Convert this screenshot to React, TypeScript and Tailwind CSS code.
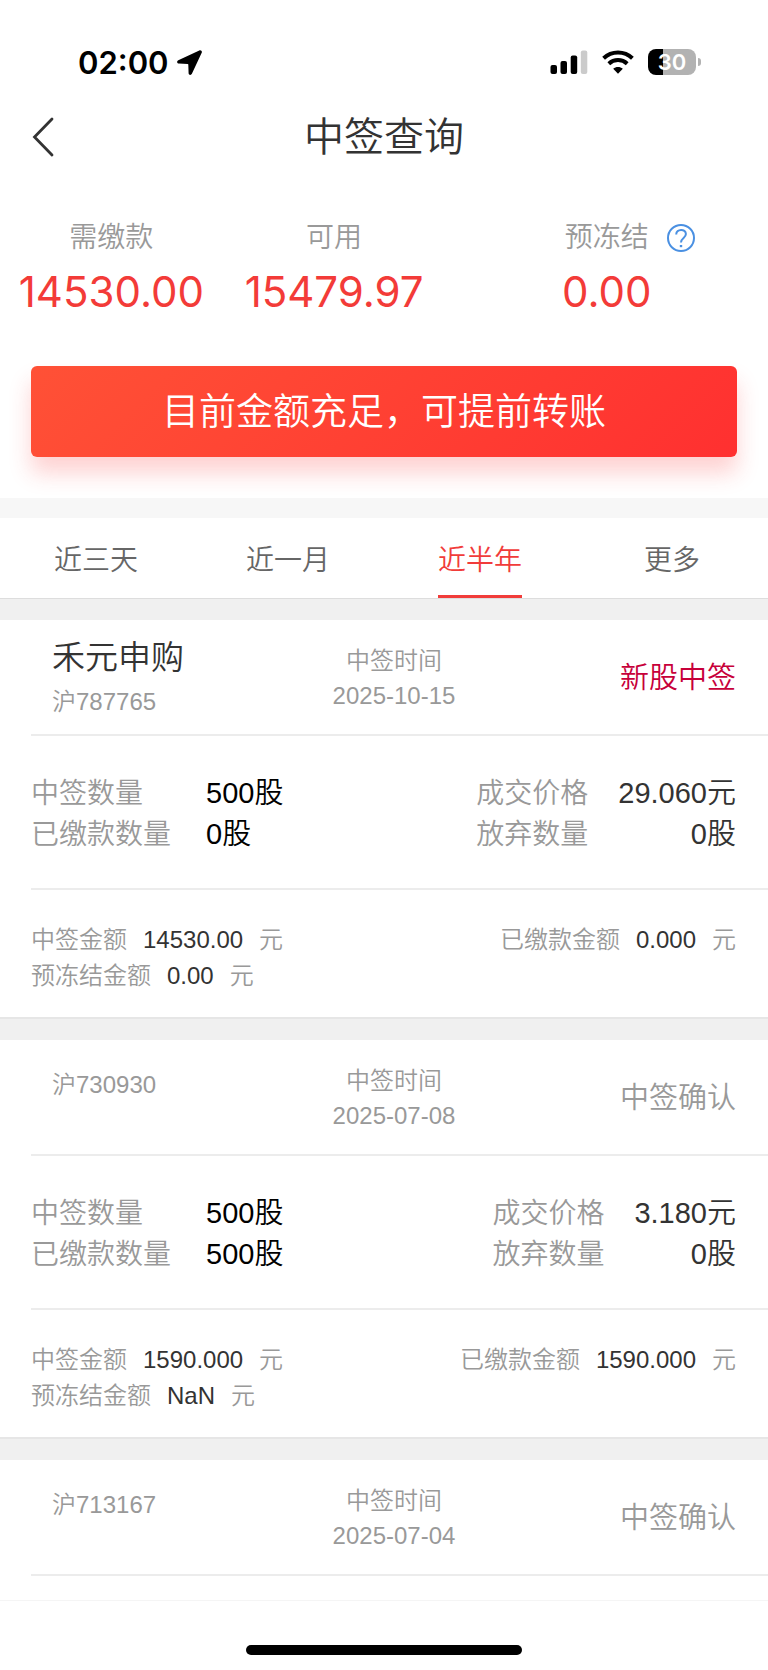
import { useState } from 'react';
import { clsx } from 'clsx';

type Details = {
  count: string;
  paidCount: string;
  price: string;
  waived: string;
  amount: string;
  frozen: string;
  paidAmount: string;
};

type Lot = {
  code: string;
  name?: string;
  date: string;
  status: string;
  highlight?: boolean;
  details?: Details;
};

const tabs = ['近三天', '近一月', '近半年', '更多'];

const lots: Lot[] = [
  {
    code: '沪787765',
    name: '禾元申购',
    date: '2025-10-15',
    status: '新股中签',
    highlight: true,
    details: {
      count: '500股',
      paidCount: '0股',
      price: '29.060元',
      waived: '0股',
      amount: '14530.00',
      frozen: '0.00',
      paidAmount: '0.000',
    },
  },
  {
    code: '沪730930',
    date: '2025-07-08',
    status: '中签确认',
    details: {
      count: '500股',
      paidCount: '500股',
      price: '3.180元',
      waived: '0股',
      amount: '1590.000',
      frozen: 'NaN',
      paidAmount: '1590.000',
    },
  },
  { code: '沪713167', date: '2025-07-04', status: '中签确认' },
];

function StatusBar() {
  return (
    <div className="flex h-[100px] items-center justify-between pt-6 pr-[67px] pl-[78px] text-black">
      <div className="flex items-center gap-2">
        <span className="pt-px font-['Inter',sans-serif] text-[31px] leading-8 font-semibold">02:00</span>
        <svg className="h-[25px] w-[25px]" viewBox="0 0 25 25" fill="currentColor" aria-hidden="true">
          <path d="M22.3.4 1.300 10.200C-.500 11.100-.200 13.400 1.800 13.500L10.700 14c.4 0 .6.2.6.6L11.600 23.200c.1 1.900 2.500 2.300 3.300.600L24.700 2.700C25.400 1.100 23.900-.300 22.300.400Z" />
        </svg>
      </div>
      <div className="flex items-center">
        <svg className="h-6 w-[38px]" viewBox="0 0 38 24" aria-hidden="true">
          <rect x="0.500" y="15" width="6.500" height="9" rx="2" />
          <rect x="10.500" y="11" width="6.500" height="13" rx="2" />
          <rect x="20.700" y="5.500" width="6.500" height="18.500" rx="2" />
          <rect x="30.800" y="0.500" width="6.500" height="23.500" rx="2" fill="#cbcbcb" />
        </svg>
        <svg className="ml-[14px] h-6 w-8" viewBox="0 0 32 24" fill="none" stroke="currentColor" aria-hidden="true">
          <path d="M1.600 8.300C9.700.600 22.300.600 30.400 8.300" strokeWidth="4" />
          <path d="M6.800 13.700C12 8.900 20 8.900 25.200 13.700" strokeWidth="4" />
          <path d="M16 23.700l-4.800-4.900c2.700-2.500 6.900-2.500 9.600 0Z" fill="currentColor" stroke="none" />
        </svg>
        <div className="ml-[14px] flex h-[26px] w-12 items-center justify-center rounded-lg bg-linear-to-r from-black from-31% to-[#b2b2b2] to-31% font-['Inter',sans-serif] text-[22px] leading-none font-semibold text-white">
          30
        </div>
        <span className="ml-[2px] h-2 w-[3px] rounded-r-full bg-[#b2b2b2]" />
      </div>
    </div>
  );
}

function SummaryItem({ label, value, help }: { label: string; value: string; help?: boolean }) {
  return (
    <div className="flex flex-col items-center">
      <dt className="relative text-[28px] leading-[44px] text-[#999]">
        {label}
        {help && (
          <button type="button" aria-label="预冻结说明" className="absolute top-2 left-full ml-[18px] text-[#4a90e2]">
            <svg className="h-7 w-7" viewBox="0 0 28 28" fill="none" stroke="currentColor" strokeWidth="2">
              <circle cx="14" cy="14" r="13" />
              <path d="M9.200 10.600c0-6.200 9.700-6.200 9.700-.500 0 4-4.900 3.700-4.900 8.400" />
              <path d="M14 21v2.200" strokeWidth="2.400" />
            </svg>
          </button>
        )}
      </dt>
      <dd className="font-['Inter',sans-serif] text-[42px] leading-[64px] font-normal text-[#f33b38]">{value}</dd>
    </div>
  );
}

function Amount({ label, value }: { label: string; value: string }) {
  return (
    <div className="flex gap-4">
      <dt>{label}</dt>
      <dd className="flex gap-4">
        <span className="text-[#333]">{value}</span>元
      </dd>
    </div>
  );
}

function LotCard({ lot }: { lot: Lot }) {
  const d = lot.details;
  return (
    <article className="border-t-[21px] border-[#f0f0f0] pl-[31px] text-[#999]">
      <header className="grid h-[116px] grid-cols-3 border-b-2 border-[#ececec] pr-8 pl-[21px]">
        <div className={clsx('text-[24px] leading-[44px]', lot.name ? 'pt-4' : 'pt-[23px]')}>
          {lot.name && <h2 className="text-[33px] text-[#333]">{lot.name}</h2>}
          <p>{lot.code}</p>
        </div>
        <div className="pt-[23px] text-center text-[24px] leading-[35px]">
          <p>中签时间</p>
          <time dateTime={lot.date}>{lot.date}</time>
        </div>
        <p className={clsx('self-center pt-1 text-right text-[29px]', lot.highlight && 'text-[#c7003a]')}>{lot.status}</p>
      </header>
      {d && (
        <>
          <div className="flex justify-between border-b-2 border-[#ececec] pt-[37px] pr-8 pb-[33px] text-[29px] leading-[41px]">
            <dl className="grid grid-cols-[145px_auto] gap-x-[30px]">
              <dt className="text-[28px]">中签数量</dt>
              <dd className="text-black">{d.count}</dd>
              <dt className="text-[28px]">已缴款数量</dt>
              <dd className="text-black">{d.paidCount}</dd>
            </dl>
            <dl className="grid grid-cols-[auto_auto] gap-x-[30px]">
              <dt className="text-[28px]">成交价格</dt>
              <dd className="text-right text-[#333]">{d.price}</dd>
              <dt className="text-[28px]">放弃数量</dt>
              <dd className="text-right text-[#333]">{d.waived}</dd>
            </dl>
          </div>
          <div className="-ml-[31px] flex justify-between border-b-2 border-[#e6e6e6] pt-8 pr-8 pb-[23px] pl-[31px] text-[24px] leading-[36px]">
            <dl>
              <Amount label="中签金额" value={d.amount} />
              <Amount label="预冻结金额" value={d.frozen} />
            </dl>
            <dl>
              <Amount label="已缴款金额" value={d.paidAmount} />
            </dl>
          </div>
        </>
      )}
    </article>
  );
}

export default function App() {
  const [active, setActive] = useState('近半年');

  return (
    <div className="flex min-h-screen flex-col bg-white font-['Liberation_Sans','Noto_Sans_CJK_SC',sans-serif] font-[350]">
      <StatusBar />

      <header className="relative flex h-[74px] items-center justify-center text-[#333]">
        <button type="button" aria-label="返回" className="absolute left-8">
          <svg className="h-10 w-[22px]" viewBox="0 0 22 40" fill="none" stroke="currentColor" strokeWidth="2.800" strokeLinecap="round">
            <path d="M20 2 2.500 20 20 38" />
          </svg>
        </button>
        <h1 className="text-[40px] leading-none">中签查询</h1>
      </header>

      <section className="pt-[42px] pb-[41px]">
        <dl className="grid grid-cols-[29%_29%_42%]">
          <SummaryItem label="需缴款" value="14530.00" />
          <SummaryItem label="可用" value="15479.97" />
          <SummaryItem label="预冻结" value="0.00" help />
        </dl>
        <div className="px-[31px] pt-[42px]">
          <button
            type="button"
            className="h-[91px] w-full rounded-md bg-linear-[135deg] from-[#ff5136] to-[#ff3030] pt-0.5 text-[37px] text-white shadow-[0_16px_22px_rgba(250,48,48,0.22)]"
          >
            目前金额充足，可提前转账
          </button>
        </div>
      </section>

      <nav className="grid grid-cols-4 justify-items-center border-t-20 border-b border-t-[#f7f7f7] border-b-[#ddd]">
        {tabs.map(tab => (
          <button
            key={tab}
            type="button"
            onClick={() => setActive(tab)}
            className={clsx(
              'h-20 border-b-3 pt-2 text-[28px]',
              tab === active ? 'border-[#f13c3a] text-[#f13c3a]' : 'border-transparent text-[#666]',
            )}
          >
            {tab}
          </button>
        ))}
      </nav>

      <main className="pb-6">
        {lots.map(lot => (
          <LotCard key={lot.code} lot={lot} />
        ))}
      </main>

      <footer className="mt-auto flex h-[71px] items-end justify-center border-t border-[#f5f5f5] pb-4">
        <span className="h-[10px] w-[36%] rounded-full bg-black" />
      </footer>
    </div>
  );
}
